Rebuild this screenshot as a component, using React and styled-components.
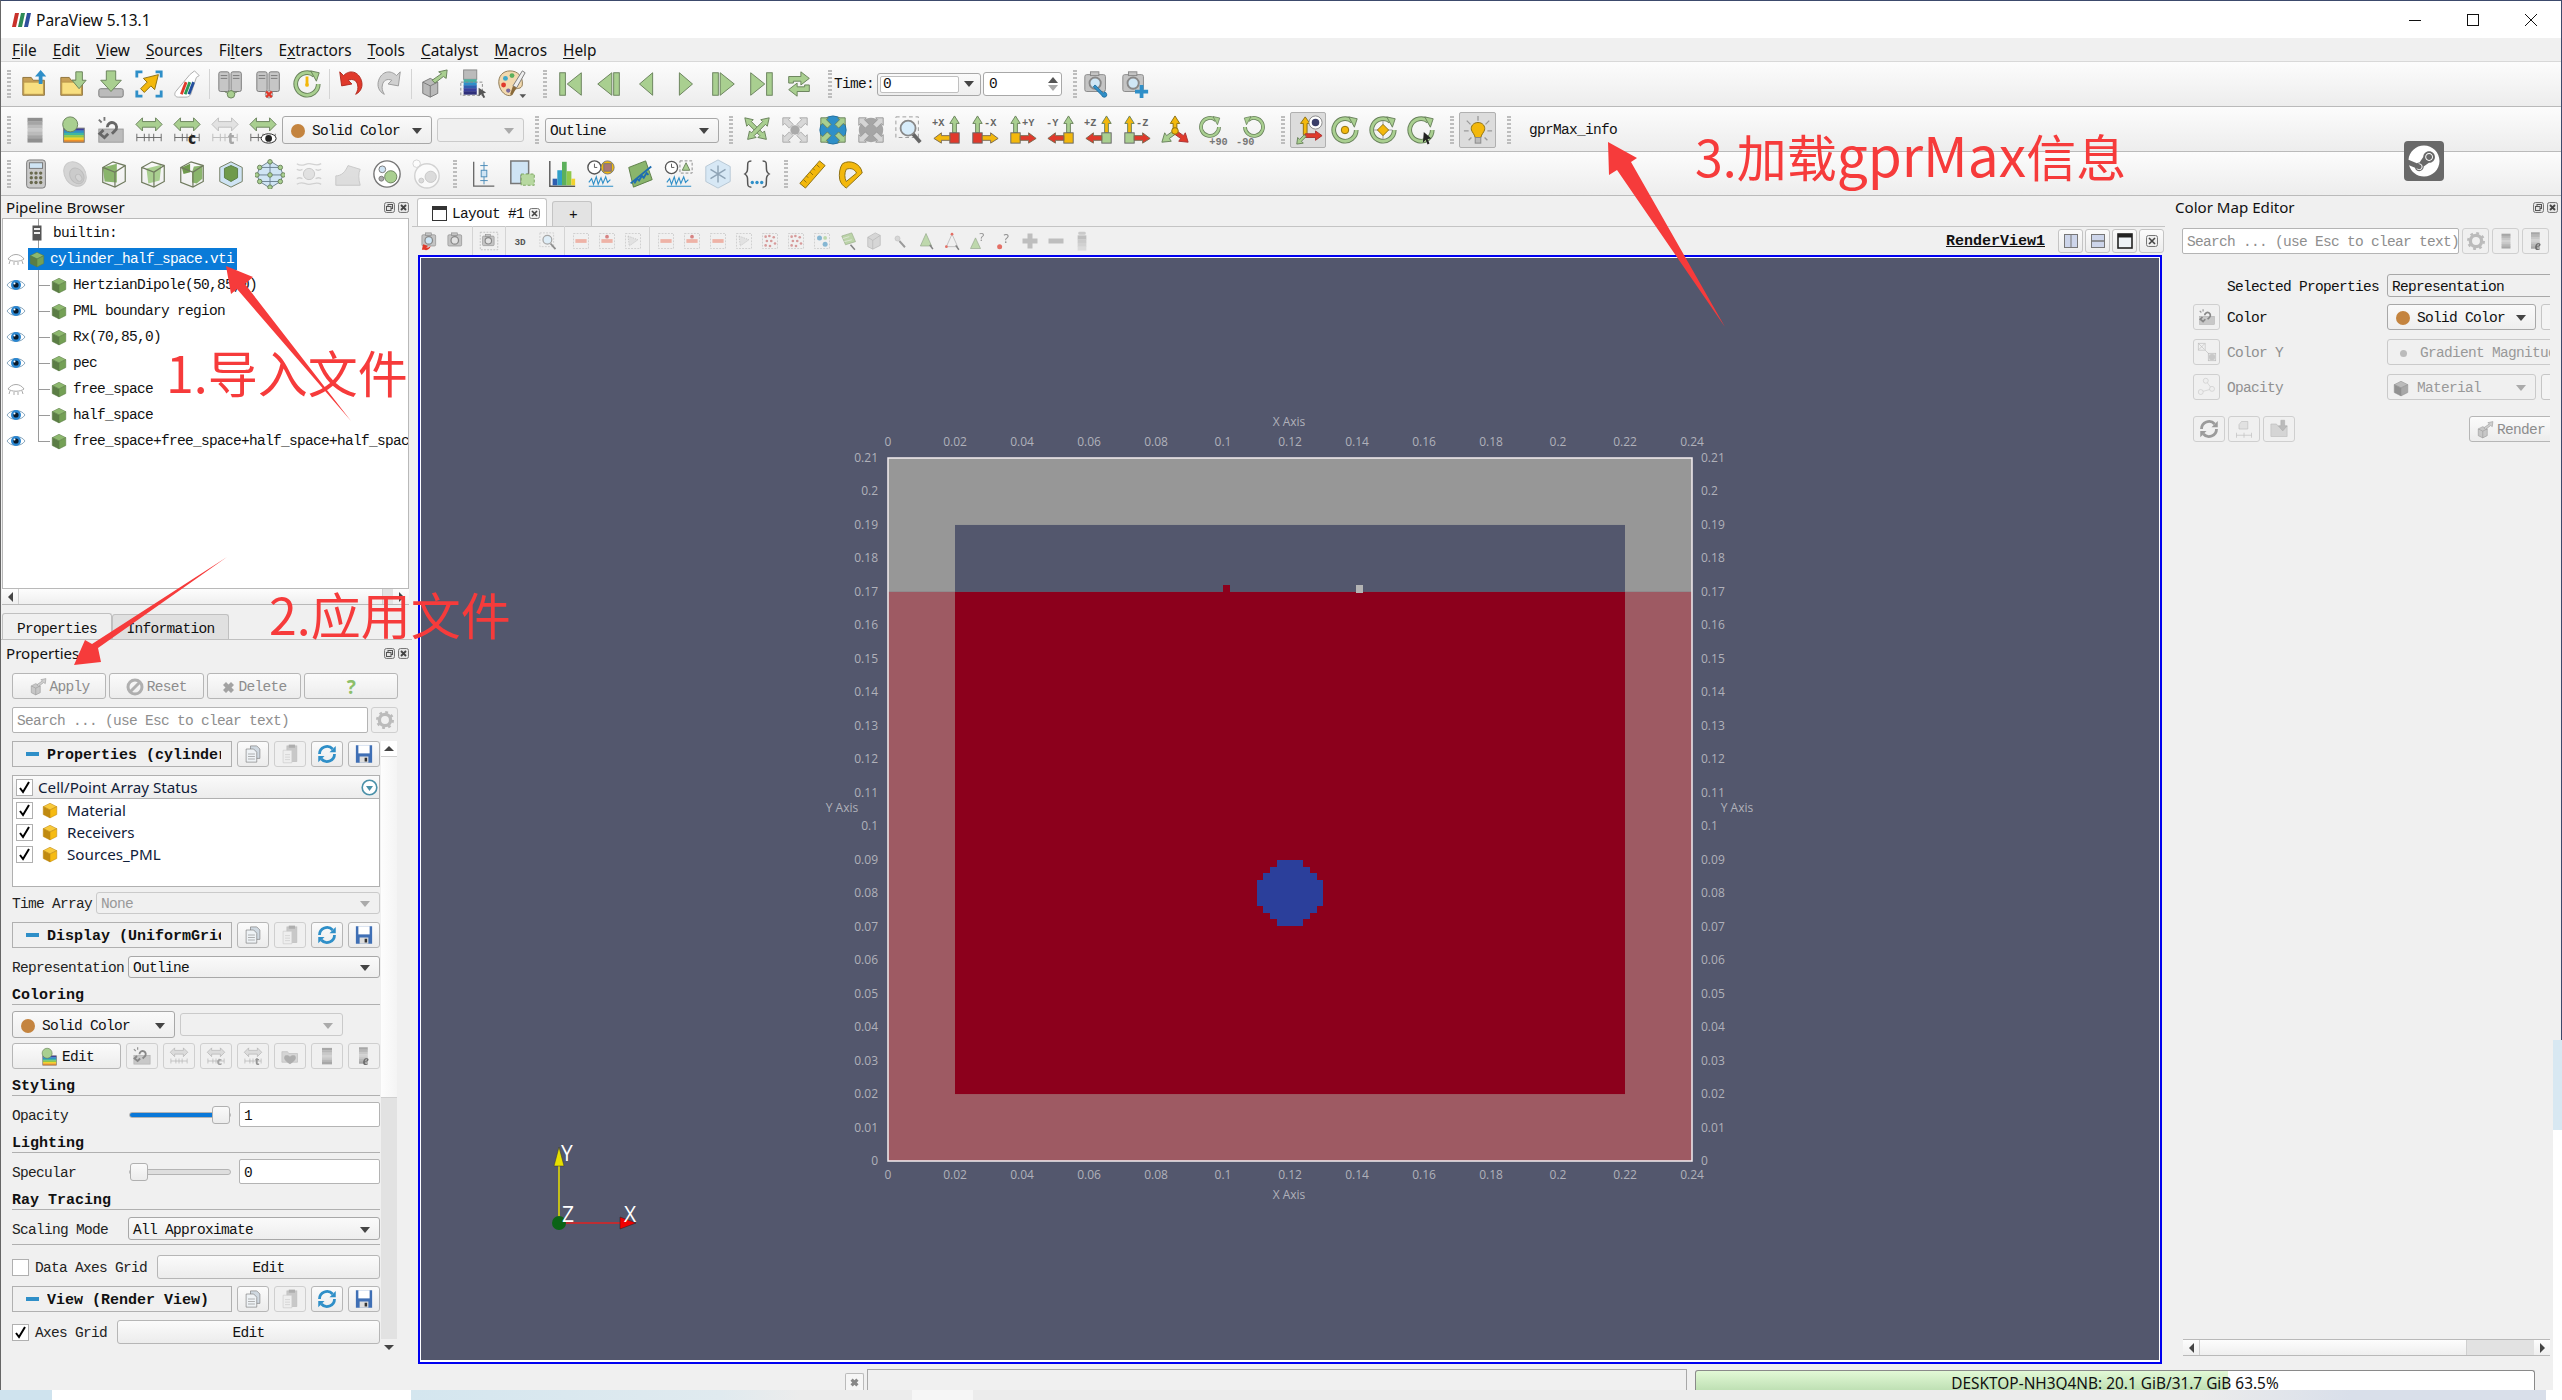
import React from 'react';
import styled, { createGlobalStyle } from 'styled-components';
import { FaSteam } from 'react-icons/fa';

const G = '#a9cf90';
const GD = '#67805a';
const Y = '#f3b80c';
const YD = '#8a6d10';
const B = '#2f8fc8';
const R = '#e0392b';

const GlobalStyle = createGlobalStyle`
  html, body { margin: 0; padding: 0; background: #f0f0f0; overflow: hidden; }
  * { box-sizing: border-box; }
`;

const MONO = `"Liberation Mono", "DejaVu Sans Mono", monospace`;
const SANS = `"Noto Sans", "Open Sans", sans-serif`;

const stripes = (x, y, w, h, colors) =>
  colors.map((c, i) => (
    <rect key={i} x={x} y={y + (i * h) / colors.length} width={w} height={h / colors.length + 0.4} fill={c} />
  ));

const GRAYS = ['#8f8f8f', '#a5a5a5', '#bbb', '#c9c9c9', '#bbb', '#a5a5a5', '#8f8f8f'];
const RAINBOW = ['#3a3fa0', '#2f8fc8', '#3fb7a0', '#8fc84a', '#f2d22e', '#ee8f2a'];

const cube = (f = '#74a055', d = '#5b7d45', t = '#8db86e') => (
  <>
    <path d="M4 10l12-6 12 6-12 6z" fill={t} stroke={d} />
    <path d="M4 10v14l12 6V16z" fill={d} stroke={d} />
    <path d="M28 10v14l-12 6V16z" fill={f} stroke={d} />
  </>
);

const folder = (arrow) => (
  <>
    <path d="M3 9h9l2 3h12v16H3z" fill="#c79f55" stroke="#8e723a" />
    <path d="M4 14h21v13H4z" fill="#f8df80" stroke="#b7964a" />
    {arrow}
  </>
);

const server = (x) => (
  <g>
    <rect x={x} y="3" width="11" height="21" rx="2" fill="#c6c6c6" stroke="#777" />
    <path d={`M${x + 2} 7h7M${x + 2} 10h7`} stroke="#777" />
  </g>
);

const ring = (inner) => (
  <>
    <path d="M24 7a12 12 0 1 0 4 9" fill="none" stroke={GD} strokeWidth="5" />
    <path d="M24 7a12 12 0 1 0 4 9" fill="none" stroke={G} strokeWidth="3" />
    <path d="M20 2l9 2-3 9z" fill={G} stroke={GD} />
    {inner}
  </>
);

const rescale = (extra, off) => (
  <>
    <path d="M2 10l7-7v4h14V3l7 7-7 7v-4H9v4z" fill={off ? '#d5d5d5' : G} stroke={off ? '#999' : GD} />
    <path d="M3 24h26M3 20v8M11 20v8M16 20v8M21 20v8M29 20v8" stroke={off ? '#999' : '#666'} fill="none" />
    {extra}
  </>
);

const arrows = (c, d) => (
  <>
    <path d="M3 3l9 2-2 2 12 12 2-2 2 9-9-2 2-2L7 10l-2 2z" fill={c} stroke={d} />
    <path d="M29 3l-9 2 2 2-12 12-2-2-2 9 9-2-2-2L25 10l2 2z" fill={c} stroke={d} />
  </>
);

const inArrows = (c, d) => (
  <path d="M3 3h8l-2 2 5 5-4 4-5-5-2 2zM29 3h-8l2 2-5 5 4 4 5-5 2 2zM3 29h8l-2-2 5-5-4-4-5 5-2-2zM29 29h-8l2-2-5-5 4-4 5 5 2-2z" fill={c} stroke={d} />
);

const axis = (label, v, h, s, left) =>
  left ? (
    <>
      <text x="0" y="12" fontFamily={MONO} fontWeight="700" fontSize="11" fill="#666">{label}</text>
      <path d="M24 1l5 8h-3v10h-4V9h-3z" fill={v} stroke={GD} />
      <rect x="19" y="19" width="10" height="11" fill={s} stroke="#666" />
      <path d="M19 22h-9v-3l-8 6 8 5v-3h9z" fill={h} stroke="#7a6a50" />
    </>
  ) : (
    <>
      <text x="15" y="12" fontFamily={MONO} fontWeight="700" fontSize="11" fill="#666">{label}</text>
      <path d="M8 1l5 8h-3v10H6V9H3z" fill={v} stroke={GD} />
      <rect x="3" y="19" width="10" height="11" fill={s} stroke="#666" />
      <path d="M13 22h9v-3l8 6-8 5v-3h-9z" fill={h} stroke="#7a6a50" />
    </>
  );

const box = (inner) => (
  <>
    {inner}
    <path d="M4 9l11-6 13 4v17l-11 6-13-5zM4 9l13 5v16M17 14l11-7" fill="none" stroke="#6f7a5e" strokeWidth="1.3" />
  </>
);

const selBox = (inner) => (
  <>
    <rect x="4" y="4" width="24" height="24" fill="none" stroke="#aaa" strokeDasharray="3 2" />
    {inner}
  </>
);

const camera = (extra) => (
  <>
    <rect x="3" y="6" width="22" height="18" rx="2" fill="#c4c4c4" stroke="#888" />
    <rect x="9" y="3" width="9" height="4" fill="#c4c4c4" stroke="#888" />
    <circle cx="14" cy="15" r="6" fill="#cfe6f5" stroke="#888" strokeWidth="2" />
    {extra}
  </>
);

const ICONS = {
  folderUp: folder(<path d="M22 1l6 7h-4v8h-4V8h-4z" fill={B} />),
  folderDown: folder(<path d="M19 3h7v9h4l-7.5 9-7.5-9h4z" fill={G} stroke={GD} />),
  saveData: (
    <>
      <rect x="3" y="21" width="26" height="9" rx="2" fill="#bbb" stroke="#777" />
      <path d="M11 2h10v10h6L16 24 5 12h6z" fill={G} stroke={GD} />
    </>
  ),
  connect: (
    <>
      <path d="M3 9V3h6M23 3h6v6M29 23v6h-6M9 29H3v-6" fill="none" stroke={B} strokeWidth="3" />
      <path d="M26 6L10 10l4 4-7 7 4 4 7-7 4 4z" fill={Y} stroke={YD} />
    </>
  ),
  macro: (
    <>
      <path d="M24 2l5 5-3 2-6 18c-1 2-3 3-5 3H7c-4 0-5-3-3-6L19 6z" fill="#fff" stroke="#aaa" />
      <path d="M10 27l5-13" stroke={R} strokeWidth="3" />
      <path d="M14 27l5-13" stroke="#2c9a55" strokeWidth="3" />
      <path d="M18 27l5-13" stroke="#234f9e" strokeWidth="3" />
    </>
  ),
  serverOn: (
    <>
      {server(3)}
      {server(16)}
      <path d="M9 24l7 4 7-4" fill="none" stroke={GD} />
      <circle cx="16" cy="27" r="4" fill={G} stroke={GD} />
    </>
  ),
  serverOff: (
    <>
      {server(3)}
      {server(16)}
      <circle cx="16" cy="27" r="4" fill="#ccc" stroke="#999" />
      <path d="M13 24l6 6M19 24l-6 6" stroke={R} strokeWidth="2.5" />
    </>
  ),
  recover: ring(
    <>
      <path d="M16 8v9" stroke={Y} strokeWidth="3" />
      <circle cx="16" cy="17" r="2" fill={Y} />
    </>
  ),
  undo: <path d="M4 3l2 15 11-2-4-4c5-2 9 0 10 5 1 3 0 7-2 10 6-3 8-9 6-15C24 3 15 0 8 7z" fill={R} stroke="#b02a1f" />,
  redo: <path d="M28 3l-2 15-11-2 4-4c-5-2-9 0-10 5-1 3 0 7 2 10-6-3-8-9-6-15C8 3 17 0 24 7z" fill="#d0d0d0" stroke="#999" />,
  cubeArrow: (
    <>
      <path d="M4 14l8-4 8 4v12l-8 4-8-4z" fill="#b9b9b9" stroke="#777" />
      <path d="M12 18l8-4M12 18v12M12 18l-8-4" stroke="#777" />
      <path d="M14 12L24 5l-3-2 9-2-1 9-3-2-9 7z" fill={G} stroke={GD} />
    </>
  ),
  colormap: (
    <>
      <rect x="6" y="1" width="14" height="10" fill="#bbb" stroke="#888" />
      {stripes(6, 11, 14, 16, ['#46b2a2', '#2f8fc8', '#2f5fb0', '#3a3f9a', '#2e2f7a'])}
      <rect x="3" y="14" width="23" height="14" fill="none" stroke="#888" strokeDasharray="3 2" />
      <path d="M22 20l8 5-3 1 2 4-2 1-2-4-3 2z" fill="#555" />
    </>
  ),
  palette: (
    <>
      <path d="M14 2C6 2 1 8 2 16c1 8 8 14 13 12 3-1 1-4 3-6 3-2 8 0 9-5C28 8 22 2 14 2z" fill="#f2d9ae" stroke="#8a7550" />
      <circle cx="9" cy="10" r="2.6" fill="#3fa7c9" />
      <circle cx="16" cy="7" r="2.6" fill="#5cb05c" />
      <circle cx="7" cy="17" r="2.6" fill={R} />
      <circle cx="12" cy="23" r="2.3" fill="#7b6a9c" />
      <path d="M27 2l3 2-9 16-4-2z" fill="#eee" stroke="#777" />
      <path d="M17 18l4 2-5 8-2-1z" fill="#8a6a3a" />
      <path d="M24 27h7l-3.5 4z" fill="#555" />
    </>
  ),
  first: (
    <>
      <rect x="4" y="4" width="6" height="24" fill={G} stroke={GD} />
      <path d="M27 4v24L12 16z" fill={G} stroke={GD} />
    </>
  ),
  prev: (
    <>
      <rect x="21" y="4" width="6" height="24" fill={G} stroke={GD} />
      <path d="M19 4v24L4 16z" fill={G} stroke={GD} />
    </>
  ),
  back: <path d="M22 4v24L8 16z" fill={G} stroke={GD} />,
  play: <path d="M10 4v24l14-12z" fill={G} stroke={GD} />,
  next: (
    <>
      <rect x="5" y="4" width="6" height="24" fill={G} stroke={GD} />
      <path d="M13 4v24l15-12z" fill={G} stroke={GD} />
    </>
  ),
  last: (
    <>
      <rect x="22" y="4" width="6" height="24" fill={G} stroke={GD} />
      <path d="M5 4v24l15-12z" fill={G} stroke={GD} />
    </>
  ),
  loop: (
    <>
      <path d="M5 15V8h13V3l9 7-9 7v-4h-8v2z" fill={G} stroke={GD} />
      <path d="M27 17v7H14v5l-9-7 9-7v4h8v-2z" fill={G} stroke={GD} />
    </>
  ),
  camWrench: camera(<path d="M14 17l9 9c0-2 2-2 3 0 1 2 0 4-2 4-2 0-3-1-3-2l-9-9z" fill={B} stroke="#1f6d9e" />),
  camPlus: camera(<path d="M21 17h4v5h5v4h-5v5h-4v-5h-5v-4h5z" fill={B} />),
  colorbar: stripes(8, 3, 16, 26, GRAYS),
  editColor: (
    <>
      {stripes(6, 14, 22, 15, RAINBOW)}
      <rect x="6" y="14" width="22" height="15" fill="none" stroke="#777" />
      <circle cx="13" cy="10" r="8" fill={G} stroke={GD} />
    </>
  ),
  linkColor: (
    <>
      <rect x="3" y="15" width="26" height="14" fill="#bbb" stroke="#999" />
      <path d="M12 13a5 5 0 1 1 8 4l-3 3" fill="none" stroke="#666" strokeWidth="3" />
      <path d="M8 16l-4 4 5 4 4-4" fill="none" stroke="#666" strokeWidth="3" />
      <path d="M3 5l3 3M9 2v4" stroke="#777" strokeWidth="2" />
    </>
  ),
  rescale: rescale(),
  rescaleOff: rescale(null, true),
  rescaleC: rescale(<text x="17" y="31" fontFamily={SANS} fontWeight="800" fontSize="16" fill="#222">c</text>),
  rescaleCOff: rescale(<text x="17" y="31" fontFamily={SANS} fontWeight="800" fontSize="16" fill="#888">c</text>, true),
  rescaleT: rescale(<text x="19" y="31" fontFamily={SANS} fontWeight="800" fontSize="16" fill="#777">t</text>, true),
  rescaleEye: rescale(
    <>
      <ellipse cx="22" cy="25" rx="8" ry="5" fill="#fff" stroke="#222" />
      <circle cx="22" cy="25" r="3.6" fill="#222" />
    </>
  ),
  fit: arrows(G, GD),
  fitClosest: (
    <>
      {inArrows('#d8d8d8', '#aaa')}
      <circle cx="16" cy="16" r="5" fill="#aaa" />
    </>
  ),
  fitData: (
    <>
      <ellipse cx="16" cy="16" rx="14" ry="15" fill={B} stroke="#1f6d9e" />
      {inArrows(G, GD)}
    </>
  ),
  fitGray: (
    <>
      <circle cx="16" cy="16" r="13" fill="#a5a5a5" />
      {inArrows('#d5d5d5', '#999')}
    </>
  ),
  zoomBox: (
    <>
      <rect x="2" y="2" width="24" height="22" fill="none" stroke="#999" strokeDasharray="4 3" />
      <path d="M20 20l8 9" stroke="#666" strokeWidth="4" />
      <circle cx="15" cy="14" r="8" fill="#d7ecfa" stroke="#888" strokeWidth="2" />
    </>
  ),
  px: axis('+X', G, Y, R, true),
  mx: axis('-X', G, Y, R, false),
  py: axis('+Y', G, R, Y, false),
  my: axis('-Y', G, R, Y, true),
  pz: axis('+Z', Y, R, G, true),
  mz: axis('-Z', Y, R, G, false),
  iso: (
    <>
      <path d="M16 1l5 8h-3v8h-4V9h-3z" fill={Y} stroke={YD} />
      <path d="M14 17l-7 5-2-3-3 10 10-1-2-3 7-5z" fill={G} stroke={GD} />
      <path d="M18 17l7 5 2-3 3 10-10-1 2-3-7-5z" fill={R} stroke="#a33" />
      <circle cx="16" cy="17" r="3.5" fill={Y} stroke={YD} />
    </>
  ),
  rotP: (
    <>
      <g transform="scale(.8)">{ring()}</g>
      <text x="12" y="32" fontFamily={MONO} fontWeight="700" fontSize="11" fill="#777">+90</text>
    </>
  ),
  rotM: (
    <>
      <g transform="translate(32 0) scale(-.8 .8)">{ring()}</g>
      <text x="0" y="32" fontFamily={MONO} fontWeight="700" fontSize="11" fill="#777">-90</text>
    </>
  ),
  orient: (
    <>
      <path d="M13 2l5 7h-3v12h-4V9H8z" fill={Y} stroke={YD} />
      <path d="M13 20h11v-3l7 5-7 5v-3H13z" fill={R} stroke="#a33" />
      <path d="M12 21l-5 5-2-2-1 7 7-1-2-2 5-5z" fill={G} stroke={GD} />
      <ellipse cx="24" cy="8" rx="7" ry="7" fill="#fff" stroke="#888" />
      <circle cx="24" cy="8" r="4" fill="#3a3f6a" />
    </>
  ),
  center: ring(<circle cx="16" cy="16" r="4" fill={Y} stroke={YD} />),
  centerFocal: ring(
    <>
      <path d="M16 6v20M6 16h20" stroke="#999" />
      <path d="M16 10l6 6-6 6-6-6z" fill={Y} stroke={YD} />
    </>
  ),
  centerPick: ring(<path d="M19 18l8 7-4 .5 2 5-2 1-2-5-3 3z" fill="#222" />),
  bulb: (
    <>
      <path d="M16 1v5M4 6l4 4M28 6l-4 4M1 17h5M26 17h5M6 27l3-3M26 27l-3-3" stroke="#999" strokeWidth="1.4" />
      <path d="M16 8c-5 0-8 4-7 8 1 3 3 4 4 8h6c1-4 3-5 4-8 1-4-2-8-7-8z" fill={Y} stroke={YD} />
      <rect x="13" y="24" width="6" height="6" fill="#bbb" stroke="#888" />
    </>
  ),
  calc: (
    <>
      <rect x="6" y="1" width="20" height="30" rx="3" fill="#c9c9c9" stroke="#777" />
      <rect x="9" y="4" width="14" height="6" fill="#cfe4f4" stroke="#777" />
      {[0, 1, 2].map((r) =>
        [0, 1, 2].map((c) => <circle key={`${r}${c}`} cx={11 + c * 5} cy={15 + r * 5} r="1.8" fill="#6a6a4f" />)
      )}
    </>
  ),
  contour: (
    <>
      <ellipse cx="16" cy="16" rx="11" ry="14" transform="rotate(-35 16 16)" fill="#c0c0c0" stroke="#aaa" />
      <ellipse cx="18" cy="18" rx="7" ry="9" transform="rotate(-35 18 18)" fill="#b0b0b0" stroke="#999" />
      <ellipse cx="20" cy="20" rx="3" ry="4" transform="rotate(-35 20 20)" fill="#c0c0c0" stroke="#999" />
    </>
  ),
  clip: box(<path d="M4 9l15-4v20L6 24z" fill="#8ab56c" />),
  slice: box(<path d="M9 10l16-4-2 17-12 3z" fill={G} />),
  threshold: box(
    <>
      <path d="M5 9l9-4v9l-7 2z" fill="#6f9a4c" />
      <path d="M18 8l9-1v14l-6 5-5-1V14z" fill="#8ab56c" />
    </>
  ),
  extract: (
    <>
      <path d="M4 9l12-6 12 6v15l-12 6-12-6z" fill="#cfe4f4" stroke="#6f7a5e" />
      <path d="M9 10l7-3 7 3v10l-7 4-7-4z" fill="#6f9a4c" stroke="#5b7d45" />
    </>
  ),
  glyph: (
    <>
      <path d="M16 2l11 7 3 8-3 7-11 7-11-7-3-7 3-8z" fill="#cfe4f4" stroke="#6a7f8f" />
      <path d="M16 2v29M2 17h28M5 9h22M5 24h22" stroke="#6a7f8f" />
      {[[16, 3], [27, 9], [30, 17], [27, 24], [16, 30], [5, 24], [2, 17], [5, 9], [16, 17]].map(([x, y]) => (
        <circle key={`${x}${y}`} cx={x} cy={y} r="2.4" fill={G} stroke={GD} />
      ))}
    </>
  ),
  stream: (
    <>
      <circle cx="16" cy="16" r="6" fill="#d5d5d5" stroke="#aaa" />
      <path d="M3 5c6 4 8 0 13 0s8 3 13 0M3 27c6-4 8 0 13 0s8-3 13 0M3 11c3 2 4 1 6 0M23 11c2 1 3 2 6 0M3 21c3-2 4-1 6 0M23 21c2-1 3-2 6 0" fill="none" stroke="#bbb" strokeWidth="1.4" />
    </>
  ),
  warp: <path d="M3 28V18c6 0 10-4 13-11l13 4c-2 4-2 10 0 17z" fill="#d0d0d0" stroke="#aaa" />,
  group: (
    <>
      <circle cx="16" cy="16" r="14" fill="#fff" stroke="#777" strokeWidth="1.5" />
      <circle cx="20" cy="19" r="6.5" fill={G} stroke={GD} />
      <circle cx="11" cy="11" r="3.6" fill="#cfe4f4" stroke="#777" />
      <circle cx="10" cy="21" r="2.6" fill="#aaa" stroke="#777" />
    </>
  ),
  groupOff: (
    <>
      <circle cx="6" cy="5" r="4" fill="#fff" stroke="#bbb" />
      <circle cx="17" cy="18" r="13" fill="#fff" stroke="#bbb" strokeWidth="1.5" />
      <circle cx="21" cy="19" r="6" fill="#ccc" stroke="#aaa" />
      <circle cx="11" cy="23" r="2.6" fill="#ccc" stroke="#aaa" />
    </>
  ),
  plotLine: (
    <>
      <path d="M5 3v26h22" fill="none" stroke="#666" strokeWidth="1.4" />
      <path d="M16 3v24M12 7h8M12 23h8" stroke="#4a8bb8" />
      <rect x="13" y="12" width="6" height="7" fill="#cfe4f4" stroke="#4a8bb8" />
    </>
  ),
  extractSel: (
    <>
      <path d="M3 2h19v14l-8 2v8H3z" fill="#cfe4f4" stroke="#777" strokeWidth="1.6" />
      <rect x="14" y="16" width="14" height="12" fill="#b7d8a0" stroke="#7aa35e" strokeDasharray="3 2" />
    </>
  ),
  histogram: (
    <>
      <path d="M3 2v27h27" fill="none" stroke="#555" strokeWidth="1.5" />
      <rect x="6" y="21" width="5" height="7" fill="#2f5fb0" />
      <rect x="11" y="12" width="5" height="16" fill="#2f9fc8" />
      <rect x="16" y="3" width="5" height="25" fill="#5cb05c" />
      <rect x="21" y="13" width="5" height="15" fill="#8fc84a" />
      <rect x="26" y="21" width="4" height="7" fill="#f2d22e" />
    </>
  ),
  plotTime: (
    <>
      <circle cx="9" cy="9" r="7" fill="#fff" stroke="#555" strokeWidth="1.5" />
      <path d="M9 5v4h3" fill="none" stroke="#555" />
      <circle cx="23" cy="9" r="7" fill={Y} stroke="#777" />
      <rect x="19" y="5" width="8" height="8" fill="#a77" stroke="#777" />
      <path d="M3 29h26M3 25l3-4 2 6 3-8 2 8 3-7 2 6 3-7 2 6 3-3" fill="none" stroke="#2f8fc8" strokeWidth="1.2" />
    </>
  ),
  linePlot: (
    <>
      <path d="M4 9l18-7 7 20-20 8z" fill="#8ab56c" stroke="#5b7d45" />
      <path d="M6 26L28 8M10 26l3-5 2 2 3-5 2 2 3-5 2 2" fill="none" stroke="#1f6db0" strokeWidth="2" />
    </>
  ),
  plotSel: (
    <>
      <circle cx="8" cy="9" r="6.5" fill="#fff" stroke="#555" strokeWidth="1.4" />
      <path d="M8 5v4h3" fill="none" stroke="#555" />
      <rect x="17" y="2" width="13" height="13" fill="none" stroke="#888" strokeDasharray="3 2" />
      <path d="M23.5 4l4 8h-8z" fill={G} stroke={GD} />
      <path d="M3 29h26M3 25l3-4 2 6 3-8 2 8 3-7 2 6 3-7 2 6 3-3" fill="none" stroke="#2f8fc8" strokeWidth="1.2" />
    </>
  ),
  snow: (
    <>
      <path d="M16 1l13 7v16l-13 7-13-7V8z" fill="#d7e8f5" stroke="#b5c6d4" />
      <path d="M16 7v18M8 11l16 10M24 11L8 21" stroke="#8ea3b5" strokeWidth="1.5" />
    </>
  ),
  braces: (
    <>
      <path d="M10 2c-4 0-4 2-4 6s0 6-3 8c3 2 3 4 3 8s0 6 4 6M22 2c4 0 4 2 4 6s0 6 3 8c-3 2-3 4-3 8s0 6-4 6" fill="none" stroke="#555" strokeWidth="1.6" />
      <circle cx="11" cy="25" r="1.8" fill={B} />
      <circle cx="16" cy="25" r="1.8" fill={B} />
      <circle cx="21" cy="25" r="1.8" fill={B} />
    </>
  ),
  ruler: (
    <>
      <path d="M24 2l6 5L9 31l-6-5z" fill={Y} stroke={YD} />
      <path d="M21 6l3 3M17 10l2 2M14 14l3 3M10 18l2 2M7 22l3 3" stroke={YD} />
    </>
  ),
  protractor: (
    <>
      <path d="M8 5c8-5 20 0 21 10L12 31c-3-2-6-5-7-9-1-6 0-13 3-17z" fill={Y} stroke={YD} />
      <path d="M12 11c5-2 9 0 11 4L12 24c-2-4-2-9 0-13z" fill="#f0f0f0" stroke={YD} />
    </>
  ),
  // view toolbar
  camUndo: camera(<path d="M3 30l2-9 8 3-3 2c3 1 5 0 7-2-1 5-6 8-10 6z" fill={R} />),
  camRedo: camera(),
  camShot: (
    <>
      <rect x="2" y="2" width="28" height="28" fill="none" stroke="#aaa" strokeDasharray="3 2" />
      <g transform="translate(3 3) scale(.85)">{camera()}</g>
    </>
  ),
  view3d: <text x="4" y="22" fontFamily={MONO} fontWeight="700" fontSize="15" fill="#555">3D</text>,
  zoomSel: (
    <>
      <rect x="3" y="3" width="22" height="22" fill="none" stroke="#aaa" strokeDasharray="3 2" />
      <path d="M20 20l8 9" stroke="#666" strokeWidth="3" />
      <circle cx="15" cy="14" r="7" fill="#d7ecfa" stroke="#888" strokeWidth="2" />
    </>
  ),
  selRed: selBox(<rect x="7" y="13" width="18" height="6" fill="#e98" />),
  selRedDot: selBox(
    <>
      <rect x="7" y="13" width="18" height="6" fill="#e98" />
      <circle cx="16" cy="9" r="3" fill="#c55" />
    </>
  ),
  selPoly: selBox(<path d="M8 8l16 6-14 10z" fill="#ddd" stroke="#999" strokeDasharray="2 2" />),
  selDots: selBox(
    <>
      {[[9, 9], [15, 8], [22, 10], [11, 16], [18, 16], [24, 20], [9, 23], [16, 24]].map(([x, y]) => (
        <circle key={`${x}${y}`} cx={x} cy={y} r="2.1" fill="#c77" />
      ))}
    </>
  ),
  selBlue: selBox(
    <>
      <circle cx="12" cy="11" r="4" fill="#5aa0c8" />
      <circle cx="21" cy="21" r="4" fill="#5aa0c8" />
      <circle cx="21" cy="11" r="3" fill={G} />
    </>
  ),
  selPlot: (
    <>
      <path d="M6 8l16-5 6 14-16 5z" fill="#a6c98a" stroke="#6f8a5a" />
      <path d="M8 12l10-3M10 17l12-3" stroke="#eee" />
      <path d="M20 22l7 8" stroke="#555" strokeWidth="2.5" />
    </>
  ),
  selCell: <path d="M6 10l12-7 8 4v16l-12 6-8-4zM6 10l8 5v14M14 15l12-8" fill="#ccc" stroke="#999" />,
  selDot: (
    <>
      <circle cx="12" cy="12" r="4" fill="#ccc" stroke="#aaa" />
      <path d="M15 16l9 10" stroke="#777" strokeWidth="3" />
    </>
  ),
  selTri: (
    <>
      <path d="M16 4l9 20H7z" fill={G} stroke={GD} />
      <path d="M22 22l5 7" stroke="#555" strokeWidth="2.5" />
    </>
  ),
  selTriRed: (
    <>
      <path d="M16 5l9 20H7z" fill="none" stroke="#888" />
      <circle cx="16" cy="5" r="2.2" fill={R} />
      <circle cx="7" cy="25" r="2.2" fill={R} />
      <path d="M22 23l5 7" stroke="#555" strokeWidth="2.5" />
    </>
  ),
  triQ: (
    <>
      <path d="M12 11l8 17H4z" fill={G} stroke={GD} />
      <text x="18" y="16" fontFamily={SANS} fontSize="18" fill="#666">?</text>
    </>
  ),
  dotQ: (
    <>
      <circle cx="9" cy="25" r="4" fill={R} />
      <text x="15" y="19" fontFamily={SANS} fontSize="20" fill="#666">?</text>
    </>
  ),
  plus: <path d="M12 4h8v8h8v8h-8v8h-8v-8H4v-8h8z" fill="#aaa" />,
  minus: <rect x="4" y="12" width="24" height="8" fill="#aaa" />,
  trash: (
    <>
      <rect x="10" y="1" width="12" height="5" rx="2" fill="#bbb" />
      {stripes(9, 7, 14, 24, ['#aaa', '#bbb', '#c4c4c4', '#d2d2d2'])}
    </>
  ),
  // property panel
  copy: (
    <>
      <path d="M12 3h10l5 5v15H12z" fill="#cfd8e0" stroke="#777" />
      <path d="M5 8h12l5 5v16H5z" fill="#eef2f5" stroke="#777" />
      <path d="M8 16h11M8 20h11M8 24h11" stroke="#888" />
    </>
  ),
  paste: (
    <>
      <rect x="11" y="3" width="16" height="25" fill="#bbb" stroke="#aaa" />
      <rect x="14" y="1" width="10" height="5" fill="#999" />
      <path d="M5 10h14v20H5z" fill="#eee" stroke="#bbb" />
      <path d="M8 17h8M8 21h8M8 25h8" stroke="#bbb" />
    </>
  ),
  refresh: (
    <>
      <path d="M4 16a12 12 0 0 1 21-8" fill="none" stroke={B} strokeWidth="4.5" />
      <path d="M28 16a12 12 0 0 1-21 8" fill="none" stroke={B} strokeWidth="4.5" />
      <path d="M30 3v10H20z" fill={B} />
      <path d="M2 29V19h10z" fill={B} />
    </>
  ),
  save: (
    <>
      <path d="M3 2h26v28H3z" fill="#3f6fb5" />
      <rect x="7" y="2" width="18" height="13" fill="#fff" />
      <rect x="9" y="20" width="14" height="10" fill="#ddd" />
      <rect x="17" y="22" width="4" height="6" fill="#333" />
    </>
  ),
  gear: (
    <>
      <circle cx="16" cy="16" r="10" fill="none" stroke="#aaa" strokeWidth="6" />
      <circle cx="16" cy="16" r="14" fill="none" stroke="#aaa" strokeWidth="4" strokeDasharray="5 6" />
    </>
  ),
  edits: (
    <>
      {stripes(8, 2, 14, 26, GRAYS)}
      <text x="14" y="30" fontFamily='"Liberation Serif", serif' fontStyle="italic" fontWeight="700" fontSize="22" fill="#444">e</text>
    </>
  ),
  heart: (
    <>
      <path d="M3 9h9l2 3h14v14H3z" fill="#ccc" stroke="#aaa" />
      <path d="M16 29c-9-6-10-9-9-12 1-3 6-3 9 0 3-3 8-3 9 0 1 3 0 6-9 12z" fill="#999" />
    </>
  ),
  colorXy: (
    <>
      <rect x="2" y="2" width="11" height="11" fill="none" stroke="#aaa" />
      <path d="M3 3l9 9M12 3l-9 9" stroke="#aaa" />
      <path d="M13 13l6 6" stroke="#aaa" />
      <rect x="18" y="18" width="12" height="12" fill="#ddd" stroke="#aaa" />
      <circle cx="24" cy="24" r="5" fill="#bbb" />
    </>
  ),
  opacity: (
    <>
      <path d="M6 24l18-5M14 6l10 13" stroke="#bbb" fill="none" />
      <circle cx="14" cy="6" r="4" fill="#eee" stroke="#bbb" />
      <circle cx="24" cy="19" r="4" fill="#eee" stroke="#bbb" />
      <circle cx="6" cy="24" r="4" fill="#eee" stroke="#bbb" />
    </>
  ),
  saveMap: (
    <>
      <path d="M12 4h10v12H8V9z" fill="#ddd" stroke="#aaa" />
      <path d="M4 26h24M4 22v8M16 22v8M28 22v8" stroke="#aaa" />
    </>
  ),
  loadMap: (
    <>
      <path d="M3 8h9l2 3h15v17H3z" fill="#ccc" stroke="#aaa" />
      <path d="M19 2h6v9h4l-7 8-7-8h4z" fill="#aaa" stroke="#999" />
    </>
  ),
};

const Glyph = styled.svg`
  display: block;
  flex: none;
  letter-spacing: 0;
`;

const Icon = ({ name, size = 30 }) => (
  <Glyph width={size} height={size} viewBox="0 0 32 32">
    {ICONS[name]}
  </Glyph>
);

const Cube = ({ color, size = 18 }) => (
  <Glyph width={size} height={size} viewBox="0 0 32 32">
    {color === 'yellow' ? cube('#f6bb12', '#c08a10', '#f8c93a') : cube()}
  </Glyph>
);

const Eye = ({ open }) =>
  open ? (
    <Glyph width="20" height="14" viewBox="0 0 20 14">
      <path d="M1 7c4-6 14-6 18 0-4 6-14 6-18 0z" fill="#fff" stroke="#8aa9c0" />
      <circle cx="10" cy="7" r="5" fill="#2a86d0" />
      <circle cx="10" cy="7" r="2.6" fill="#0a1a2a" />
      <circle cx="8.5" cy="5.5" r="1" fill="#fff" />
    </Glyph>
  ) : (
    <Glyph width="20" height="14" viewBox="0 0 20 14">
      <path d="M2 7c4-6 12-6 16 0-4 3-12 3-16 0zM4 9l-1 3M8 10v3M12 10v3M16 9l1 3" fill="#fff" stroke="#aaa" />
    </Glyph>
  );

const Shell = styled.div`
  width: 2562px;
  height: 1400px;
  overflow: hidden;
  position: relative;
  display: flex;
  flex-direction: column;
  background: #f0f0f0;
  font-family: ${MONO};
  font-size: 14.5px;
  letter-spacing: -0.7px;
  color: #111;
`;

const WindowFrame = styled.div`
  height: 1390px;
  display: flex;
  flex-direction: column;
  border-top: 1px solid #3c4a6c;
  border-left: 1px solid #666;
  border-right: 1px solid #3c4a6c;
`;

const TitleBar = styled.div`
  height: 37px;
  flex: none;
  background: #fff;
  display: flex;
  align-items: center;
  padding-left: 10px;
  font-family: ${SANS};
  font-size: 15.5px;
  letter-spacing: 0;
  color: #111;
`;

const AppLogo = styled.svg`
  width: 20px;
  height: 16px;
  margin-right: 5px;
`;

const WinButtons = styled.div`
  margin-left: auto;
  display: flex;
  margin-right: 1px;
`;

const WinButton = styled.div`
  width: 58px;
  height: 37px;
  display: flex;
  align-items: center;
  justify-content: center;
`;

const MenuBar = styled.div`
  height: 24px;
  flex: none;
  display: flex;
  gap: 16px;
  align-items: center;
  padding-left: 11px;
  padding-top: 1px;
  font-family: ${SANS};
  font-size: 15.4px;
  letter-spacing: 0;
  border-bottom: 1px solid #d8d8d8;
  u { text-underline-offset: 2px; }
`;

const ToolRow = styled.div`
  height: ${({ $h }) => $h || 45}px;
  flex: none;
  display: flex;
  align-items: center;
  padding-top: ${({ $pt }) => $pt || 0}px;
  background: linear-gradient(#fcfcfc, #ededed);
  border-bottom: 1px solid #bababa;
`;

const Grip = styled.div`
  flex: none;
  width: 4px;
  height: 28px;
  margin-left: ${({ $l }) => $l ?? 6}px;
  margin-right: ${({ $r }) => $r ?? 5}px;
  border-left: 2px dotted #bdbdbd;
  border-right: 2px dotted #bdbdbd;
`;

const Sep = styled.div`
  flex: none;
  width: 1px;
  height: 30px;
  margin: 0 ${({ $m }) => $m ?? 2.5}px;
  background: #d4d4d4;
`;

const ToolBtn = styled.div`
  flex: none;
  width: ${({ $w }) => $w || 38}px;
  height: 36px;
  display: flex;
  align-items: center;
  justify-content: center;
  border-radius: 2px;
  ${({ $on }) => $on && 'background: #dcdcdc; border: 1px solid #b0b0b0;'}
  ${({ $off }) => $off && 'filter: grayscale(1); opacity: .6;'}
`;

const ViewTool = styled(ToolBtn)`
  height: 24px;
  width: 26px;
  opacity: ${({ $fade }) => ($fade ? 0.7 : 1)};
`;

const Tools = ({ names, w, size }) =>
  names.map((n, i) => {
    const off = n[0] === '-';
    return (
      <ToolBtn key={i} $w={w} $off={off}>
        <Icon name={off ? n.slice(1) : n} size={size} />
      </ToolBtn>
    );
  });

const Button = styled.div`
  flex: ${({ $w }) => ($w ? 'none' : '1')};
  width: ${({ $w }) => ($w ? `${$w}px` : 'auto')};
  height: ${({ $h }) => $h || 26}px;
  display: flex;
  align-items: center;
  justify-content: center;
  gap: 3px;
  padding-top: 2px;
  background: linear-gradient(#fbfbfb, #ececec);
  border: 1px solid #b6b6b6;
  border-radius: 3px;
  white-space: nowrap;
  overflow: hidden;
  color: ${({ $off }) => ($off ? '#8d8d8d' : '#111')};
  ${({ $off }) => $off && 'svg { filter: grayscale(1); opacity: .75; }'}
`;

const HelpButton = styled(Button)`
  color: #8cbf6a;
  font-family: ${SANS};
  font-weight: 700;
  font-size: 19px;
`;

const SmallBtn = styled(Button)`
  padding-top: 0;
  background: ${({ $off }) => ($off ? '#f0f0f0' : 'linear-gradient(#fbfbfb, #ececec)')};
  ${({ $off }) => $off && 'border-color: #cfcfcf;'}
`;

const Combo = styled.div`
  flex: ${({ $w }) => ($w ? 'none' : '1')};
  width: ${({ $w }) => ($w ? `${$w}px` : 'auto')};
  margin-left: ${({ $ml }) => $ml || 0}px;
  height: ${({ $h }) => $h || 23}px;
  display: flex;
  align-items: center;
  gap: 7px;
  padding: 2px 9px 0 4px;
  background: ${({ $flat }) => ($flat ? '#f0f0f0' : 'linear-gradient(#fafafa, #eeeeee)')};
  border: 1px solid ${({ $off }) => ($off ? '#cacaca' : '#a8a8a8')};
  border-radius: 3px;
  white-space: nowrap;
  overflow: hidden;
  color: ${({ $off }) => ($off ? '#999' : '#111')};
  ${({ $off }) => $off && 'svg { filter: grayscale(1); opacity: .75; }'}
  &::after {
    content: '';
    margin-left: auto;
    flex: none;
    border-left: 5px solid transparent;
    border-right: 5px solid transparent;
    border-top: 6px solid ${({ $off }) => ($off ? '#aaa' : '#444')};
  }
`;

const Swatch = styled.span`
  flex: none;
  width: ${({ $dot }) => ($dot ? 7 : 14)}px;
  height: ${({ $dot }) => ($dot ? 7 : 14)}px;
  margin: 0 ${({ $dot }) => ($dot ? 6 : 0)}px 0 ${({ $dot }) => ($dot ? 8 : 4)}px;
  border-radius: 50%;
  background: ${({ $dot }) => ($dot ? '#bbb' : '#c4843f')};
`;

const Input = styled.div`
  flex: ${({ $w }) => ($w ? 'none' : '1')};
  width: ${({ $w }) => ($w ? `${$w}px` : 'auto')};
  height: ${({ $h }) => $h || 26}px;
  display: flex;
  align-items: center;
  padding: 2px 0 0 4px;
  background: #fff;
  border: 1px solid #b4b4b4;
  border-radius: 2px;
  white-space: nowrap;
  overflow: hidden;
  color: ${({ $hint }) => ($hint ? '#8e8e8e' : '#111')};
`;

const TimeLabel = styled.span`
  flex: none;
  width: 43px;
`;

const TimeCombo = styled.div`
  flex: none;
  width: 104px;
  height: 23px;
  padding: 2px 21px 2px 2px;
  margin-right: 2px;
  background: linear-gradient(#fafafa, #eeeeee);
  border: 1px solid #a8a8a8;
  border-radius: 3px;
  position: relative;
  &::after {
    content: '';
    position: absolute;
    right: 6px;
    top: 7px;
    border-left: 5px solid transparent;
    border-right: 5px solid transparent;
    border-top: 6px solid #444;
  }
`;

const TimeValue = styled.div`
  height: 100%;
  background: #fff;
  border: 1px solid #c0c0c0;
  border-radius: 2px;
  padding-left: 2px;
  line-height: 15px;
`;

const Spin = styled.div`
  flex: none;
  width: 79px;
  height: 24px;
  background: #fff;
  border: 1px solid #a8a8a8;
  border-radius: 3px;
  display: flex;
  align-items: center;
  padding-left: 5px;
  position: relative;
  &::before {
    content: '';
    position: absolute;
    right: 3px;
    top: 4px;
    border-left: 5px solid transparent;
    border-right: 5px solid transparent;
    border-bottom: 6px solid #555;
  }
  &::after {
    content: '';
    position: absolute;
    right: 3px;
    bottom: 4px;
    border-left: 5px solid transparent;
    border-right: 5px solid transparent;
    border-top: 6px solid #aaa;
  }
`;

const InfoLabel = styled.span`
  white-space: nowrap;
`;

const Docks = styled.div`
  flex: 1;
  min-height: 0;
  display: flex;
`;

const LeftDock = styled.div`
  flex: none;
  width: 411px;
  display: flex;
  flex-direction: column;
`;

const DockTitle = styled.div`
  flex: none;
  height: ${({ $h }) => $h || 22}px;
  display: flex;
  align-items: center;
  padding: 0 3px 0 ${({ $pl }) => $pl ?? 5}px;
  font-family: ${SANS};
  font-size: 15.1px;
  letter-spacing: 0;
`;

const DockBtns = styled.div`
  margin-left: auto;
  display: flex;
  gap: 3px;
`;

const DockBtn = styled.svg`
  width: 11px;
  height: 11px;
  display: block;
`;

const DockButtons = () => (
  <DockBtns>
    <DockBtn viewBox="0 0 11 11">
      <rect x=".5" y=".5" width="10" height="10" rx="2" fill="#e4e4e4" stroke="#777" />
      <rect x="4" y="2.5" width="4.5" height="4" fill="none" stroke="#555" />
      <rect x="2.5" y="4.5" width="4.5" height="4" fill="#e4e4e4" stroke="#555" />
    </DockBtn>
    <DockBtn viewBox="0 0 11 11">
      <rect x=".5" y=".5" width="10" height="10" rx="2" fill="#e4e4e4" stroke="#777" />
      <path d="M3 3l5 5M8 3l-5 5" stroke="#444" strokeWidth="1.8" />
    </DockBtn>
  </DockBtns>
);

const Tree = styled.div`
  flex: none;
  width: 407px;
  margin-left: 1px;
  height: 370px;
  padding-top: 1px;
  background: #fff;
  border: 1px solid #b9b9b9;
  border-bottom: 0;
  overflow: hidden;
  position: relative;
  &::before {
    content: '';
    position: absolute;
    left: 35px;
    top: 0;
    height: 223px;
    width: 1px;
    background: #9a9a9a;
  }
`;

const TreeRow = styled.div`
  height: 26px;
  display: flex;
  align-items: center;
  position: relative;
  white-space: nowrap;
`;

const EyeCell = styled.div`
  flex: none;
  width: 25px;
  padding-left: 3px;
`;

const RootLabel = styled.div`
  display: flex;
  align-items: center;
  gap: 4px;
  height: 22px;
  padding-right: 3px;
  background: ${({ $sel }) => ($sel ? '#0a7bd8' : 'transparent')};
  color: ${({ $sel }) => ($sel ? '#fff' : '#111')};
`;

const BuiltinLabel = styled(RootLabel)`
  padding-left: 4px;
  gap: 11px;
`;

const ChildLabel = styled.div`
  display: flex;
  align-items: center;
  gap: 5px;
  margin-left: 22px;
  position: relative;
  &::before {
    content: '';
    position: absolute;
    left: -12px;
    top: 50%;
    width: 12px;
    height: 1px;
    background: #9a9a9a;
  }
`;

const HScroll = styled.div`
  flex: none;
  height: 17px;
  margin-left: ${({ $ml }) => $ml ?? 1}px;
  width: ${({ $w }) => $w}px;
  display: flex;
  background: linear-gradient(#fdfdfd, #efefef);
  border-top: 1px solid #b9b9b9;
  border-bottom: 1px solid #b9b9b9;
`;

const ScrollEnd = styled.div`
  flex: none;
  width: 16px;
  display: flex;
  align-items: center;
  justify-content: center;
  &::after {
    content: '';
    border-top: 5px solid transparent;
    border-bottom: 5px solid transparent;
    ${({ $dir }) => ($dir === 'left' ? 'border-right: 5px solid #444;' : 'border-left: 5px solid #444;')}
  }
`;

const ScrollHandle = styled.div`
  flex: 1;
  border-left: 1px solid #d0d0d0;
  border-right: 1px solid #d0d0d0;
`;

const ScrollTrack = styled.div`
  flex: none;
  width: ${({ $w }) => $w}px;
  background: #e2e2e2;
`;

const Splitter = styled.div`
  flex: none;
  height: 9px;
`;

const Tabs = styled.div`
  flex: none;
  height: 26px;
  display: flex;
  align-items: flex-end;
  padding-left: 1px;
  border-bottom: 1px solid #c0c0c0;
`;

const Tab = styled.div`
  flex: none;
  width: ${({ $w }) => $w}px;
  height: ${({ $active }) => ($active ? 26 : 25)}px;
  display: flex;
  align-items: center;
  justify-content: center;
  padding-top: 4px;
  background: ${({ $active }) => ($active ? '#f0f0f0' : '#e0e0e0')};
  border: 1px solid #c0c0c0;
  border-bottom: 0;
  border-radius: 3px 3px 0 0;
`;

const PropsPane = styled.div`
  flex: none;
  width: 386px;
  margin-left: 11px;
  margin-top: 7px;
  display: flex;
  flex-direction: column;
`;

const ActionRow = styled.div`
  display: flex;
  gap: 3px;
  height: 26px;
`;

const SearchRow = styled.div`
  display: flex;
  gap: 3px;
  margin-top: ${({ $mt }) => $mt ?? 8}px;
  height: 26px;
`;

const ScrollArea = styled.div`
  margin-top: 8px;
  height: 614px;
  display: flex;
`;

const ScrollContent = styled.div`
  flex: none;
  width: 368px;
  overflow: hidden;
  display: flex;
  flex-direction: column;
`;

const VScroll = styled.div`
  flex: none;
  width: 16px;
  margin-left: 1px;
  display: flex;
  flex-direction: column;
  background: #e2e2e2;
`;

const VEnd = styled.div`
  flex: none;
  height: 16px;
  display: flex;
  align-items: center;
  justify-content: center;
  background: #f0f0f0;
  ${({ $top }) => $top && 'background: #fff; border-bottom: 1px solid #d0d0d0;'}
  &::after {
    content: '';
    border-left: 5px solid transparent;
    border-right: 5px solid transparent;
    ${({ $top }) => ($top ? 'border-bottom: 5px solid #444;' : 'border-top: 5px solid #444;')}
  }
`;

const VHandle = styled.div`
  flex: none;
  height: 341px;
  background: linear-gradient(90deg, #fdfdfd, #f4f4f4);
  border-bottom: 1px solid #cfcfcf;
`;

const VFill = styled.div`
  flex: 1;
`;

const Section = styled.div`
  flex: none;
  display: flex;
  gap: 5px;
  height: 26px;
  margin-top: ${({ $mt }) => $mt ?? 0}px;
`;

const SectionTitle = styled.div`
  flex: none;
  width: 220px;
  height: 26px;
  display: flex;
  align-items: center;
  padding-left: 13px;
  gap: 8px;
  background: #f0f0f0;
  border: 1px solid #b0b0b0;
  font-weight: 700;
  font-size: 15px;
  letter-spacing: 0;
  white-space: nowrap;
  overflow: hidden;
  &::before {
    content: '';
    flex: none;
    width: 13px;
    height: 4px;
    background: #2f8fc8;
  }
`;

const SectionSpan = styled.span`
  display: block;
  overflow: hidden;
  width: 174px;
  padding-top: 2px;
`;

const ArrayBox = styled.div`
  flex: none;
  margin-top: 8px;
  height: 112px;
  background: #fff;
  border: 1px solid #b0b0b0;
  font-family: ${SANS};
  font-size: 15.2px;
  letter-spacing: 0;
  color: #10203a;
`;

const ArrayHead = styled.div`
  height: 23px;
  display: flex;
  align-items: center;
  padding-left: 3px;
  gap: 5px;
  background: linear-gradient(#fafafa, #ececec);
  border-bottom: 1px solid #b0b0b0;
`;

const ArrayRow = styled.div`
  height: 22px;
  display: flex;
  align-items: center;
  padding-left: 3px;
  gap: 8px;
`;

const Check = styled.span`
  flex: none;
  width: 17px;
  height: 17px;
  display: flex;
  align-items: center;
  justify-content: center;
  background: #fff;
  border: 1px solid #b0b0b0;
`;

const CheckMark = () => (
  <Glyph width="13" height="13" viewBox="0 0 13 13">
    <path d="M2 7l3 4 6-10" fill="none" stroke="#000" strokeWidth="2" />
  </Glyph>
);

const ExpandBtn = styled.svg`
  width: 17px;
  height: 17px;
  margin-left: auto;
  margin-right: 1px;
`;

const Field = styled.div`
  flex: none;
  display: flex;
  align-items: center;
  height: ${({ $h }) => $h || 23}px;
  margin-top: ${({ $mt }) => $mt ?? 6}px;
`;

const FieldLabel = styled.span`
  flex: none;
  width: ${({ $w }) => $w}px;
  padding-top: 2px;
  white-space: nowrap;
  color: #222;
`;

const GroupLabel = styled.div`
  flex: none;
  height: 19px;
  margin-top: ${({ $mt }) => $mt ?? 7}px;
  font-weight: 700;
  font-size: 15px;
  letter-spacing: 0;
  line-height: 19px;
  border-bottom: 1px solid #b0b0b0;
`;

const ColorRow = styled.div`
  flex: none;
  display: flex;
  align-items: center;
  gap: 5px;
  margin-top: ${({ $mt }) => $mt ?? 6}px;
  height: ${({ $h }) => $h || 27}px;
`;

const Slider = styled.div`
  flex: none;
  width: 102px;
  height: 6px;
  margin-right: 8px;
  border-radius: 3px;
  border: 1px solid #b4b4b4;
  background: ${({ $pct }) => `linear-gradient(90deg, #0a78d8 ${$pct}%, #dedede ${$pct}%)`};
  position: relative;
  &::after {
    content: '';
    position: absolute;
    top: -7px;
    left: ${({ $pct }) => ($pct ? 'auto' : '0')};
    right: ${({ $pct }) => ($pct ? '0' : 'auto')};
    width: 16px;
    height: 16px;
    background: linear-gradient(#fafafa, #ececec);
    border: 1px solid #b0b0b0;
    border-radius: 3px;
  }
`;

const Divider = styled.div`
  flex: none;
  height: 1px;
  margin-top: 4px;
  background: #b0b0b0;
`;

const GrayCheck = styled(Check)`
  margin-right: 6px;
`;

const Center = styled.div`
  flex: 1;
  min-width: 0;
  display: flex;
  flex-direction: column;
`;

const ViewTabs = styled.div`
  flex: none;
  height: 30px;
  display: flex;
  align-items: flex-end;
  gap: 5px;
  padding-left: 5px;
`;

const ViewTab = styled.div`
  flex: none;
  width: ${({ $w }) => $w}px;
  height: ${({ $h }) => $h}px;
  display: flex;
  align-items: center;
  gap: 5px;
  padding-left: ${({ $pl }) => $pl}px;
  padding-top: 2px;
  background: ${({ $active }) => ($active ? '#fff' : '#e3e3e3')};
  border: 1px solid #c4c4c4;
  border-bottom: 0;
  border-radius: 3px 3px 0 0;
`;

const LayoutGlyph = styled.span`
  flex: none;
  width: 15px;
  height: 15px;
  border: 1px solid #333;
  border-top-width: 4px;
  background: #fff;
`;

const ViewBar = styled.div`
  flex: none;
  height: 29px;
  display: flex;
  align-items: center;
  padding-left: 5px;
  padding-right: 1px;
  border-top: 1px solid #c4c4c4;
`;

const ViewName = styled.span`
  margin-left: auto;
  font-weight: 700;
  font-size: 15px;
  letter-spacing: 0;
  text-decoration: underline;
  margin-right: 11px;
`;

const PaneBtn = styled.div`
  flex: none;
  width: 25px;
  height: 24px;
  margin-left: 2px;
  display: flex;
  align-items: center;
  justify-content: center;
  background: linear-gradient(#fbfbfb, #ececec);
  border: 1px solid #c4c4c4;
  border-radius: 3px;
`;

const Viewport = styled.div`
  flex: 1;
  min-height: 0;
  width: 1744px;
  margin-left: 6px;
  padding: 1px;
  border: 2px solid #0000f0;
  background: #fff;
  overflow: hidden;
`;

const PlotCanvas = styled.svg`
  display: block;
  background: #53576d;
  letter-spacing: 0;
`;

const RightDock = styled.div`
  flex: none;
  width: 396px;
  display: flex;
  flex-direction: column;
`;

const RightPane = styled.div`
  flex: none;
  width: 368px;
  margin-left: 17px;
  margin-top: 10px;
  overflow: hidden;
`;

const MapRow = styled.div`
  display: grid;
  grid-template-columns: 27px 167px 149px 20px;
  align-items: center;
  height: ${({ $h }) => $h || 26}px;
  margin-top: ${({ $mt }) => $mt ?? 9}px;
  padding-left: 11px;
  width: 500px;
  color: ${({ $off }) => ($off ? '#909090' : '#111')};
`;

const MapLabel = styled.span`
  padding: 2px 0 0 7px;
  white-space: nowrap;
`;

const MapStub = styled.div`
  height: 26px;
  margin-left: 5px;
  width: 30px;
  background: #f4f4f4;
  border: 1px solid #c6c6c6;
  border-radius: 3px;
`;

const MapWideCombo = styled(Combo)`
  width: 200px;
`;

const MapActions = styled.div`
  display: flex;
  gap: 3px;
  margin-top: 16px;
  padding-left: 11px;
  height: 26px;
  width: 600px;
`;

const RenderBtn = styled(Button)`
  margin-left: 171px;
  justify-content: flex-start;
  padding-left: 6px;
`;

const BottomScroll = styled.div`
  margin-top: auto;
  margin-bottom: 8px;
`;

const StatusBar = styled.div`
  flex: none;
  height: 26px;
  display: flex;
  align-items: flex-end;
  padding-left: 844px;
`;

const StatusClose = styled.div`
  flex: none;
  width: 19px;
  height: 17px;
  margin-right: 3px;
  border: 1px solid #bbb;
  border-bottom: 0;
  border-radius: 2px 2px 0 0;
  background: #f6f6f6;
  display: flex;
  align-items: center;
  justify-content: center;
`;

const StatusMsg = styled.div`
  flex: none;
  width: 820px;
  height: 21px;
  margin-right: 8px;
  border: 1px solid #a8a8a8;
  border-bottom: 0;
`;

const MemBar = styled.div`
  flex: none;
  width: 840px;
  height: 20px;
  display: flex;
  align-items: center;
  justify-content: center;
  background: linear-gradient(90deg, #0000 63.5%, #fff 63.5%), linear-gradient(#e2f9d6, #bfe0b4);
  border: 1px solid #8a8a8a;
  border-bottom: 0;
  border-radius: 3px 3px 0 0;
  font-family: ${SANS};
  font-size: 15.4px;
  letter-spacing: 0;
  color: #111;
  white-space: nowrap;
  overflow: hidden;
  padding-top: 5px;
`;

const Taskbar = styled.div`
  flex: none;
  height: 10px;
  overflow: hidden;
  position: relative;
  background: linear-gradient(
    90deg,
    #cfe3ee 0,
    #cfe3ee 52px,
    #fff 52px,
    #fff 411px,
    #d4e6ef 411px,
    #e0eaef 720px,
    #ececec 800px,
    #ececec 912px,
    #f6f6f6 912px,
    #f6f6f6 973px,
    #ececec 973px,
    #ececec 2200px,
    #d9dfea 2350px,
    #d9dfea 2546px,
    #fff 2546px
  );
  font-family: ${SANS};
  font-size: 15px;
  letter-spacing: 0;
  line-height: 20px;
`;

const Clock = styled.span`
  position: absolute;
  left: 2419px;
  top: 6px;
`;

const EdgeStrip = styled.div`
  position: absolute;
  left: 2553px;
  top: 1040px;
  bottom: 0;
  width: 9px;
  background: linear-gradient(#d8e8f2 0, #d8e8f2 90px, #fff 90px);
`;

const Note = styled.div`
  position: absolute;
  left: ${({ $x }) => $x}px;
  top: ${({ $y }) => $y}px;
  font-family: "Noto Sans CJK SC", "Noto Sans", sans-serif;
  font-weight: 400;
  font-size: ${({ $size }) => $size}px;
  letter-spacing: 0;
  line-height: 1;
  color: #f63b3b;
  white-space: nowrap;
`;

const NoteLatin = styled.span`
  font-size: 55px;
`;

const ArrowLayer = styled.svg`
  position: absolute;
  inset: 0;
  width: 2562px;
  height: 1400px;
  pointer-events: none;
`;

const SteamBadge = styled.div`
  position: absolute;
  left: 2404px;
  top: 141px;
  width: 40px;
  height: 40px;
  border-radius: 4px;
  background: #696969;
  display: flex;
  align-items: center;
  justify-content: center;
  color: #fff;
`;

const XTICKS = [0, 0.02, 0.04, 0.06, 0.08, 0.1, 0.12, 0.14, 0.16, 0.18, 0.2, 0.22, 0.24];
const YTICKS = Array.from({ length: 22 }, (_, i) => i / 100);
const px = (v) => 888 + v * 3350;
const py = (v) => 1161 - v * 3347.6;
const fmt = (v) => String(Math.round(v * 100) / 100);

const AXIS = '#b0b1ba';

const Plot = () => (
  <PlotCanvas width="1738" height="1102" viewBox="421 258 1738 1102">
    <rect x={px(0)} y={py(0.21)} width="804" height={py(0.17) - py(0.21)} fill="#979797" />
    <rect x={px(0)} y={py(0.17)} width="804" height={py(0) - py(0.17)} fill="#9e5a63" />
    <rect x={px(0.02)} y={py(0.19)} width={px(0.22) - px(0.02)} height={py(0.17) - py(0.19)} fill="#53576d" />
    <rect x={px(0.02)} y={py(0.17)} width={px(0.22) - px(0.02)} height={py(0.02) - py(0.17)} fill="#8c001c" />
    <rect x="1223" y="585" width="7" height="8" fill="#8c001c" />
    <rect x="1356" y="585" width="7" height="8" fill="#b4b4b4" />
    <path
      d="M1277 860h26v7h7v6h7v7h6v26h-6v7h-7v6h-7v7h-26v-7h-7v-6h-7v-7h-6v-26h6v-7h7v-6h7z"
      fill="#2b3f9b"
    />
    <rect x={px(0)} y={py(0.21)} width="804" height={py(0) - py(0.21)} fill="none" stroke="#f4eef0" strokeWidth="1.5" />
    <g fill={AXIS} fontFamily='"Open Sans", "Liberation Sans", sans-serif' fontSize="12">
      {XTICKS.map((v) => (
        <g key={v} textAnchor="middle">
          <text x={px(v)} y="446">{fmt(v)}</text>
          <text x={px(v)} y="1179">{fmt(v)}</text>
        </g>
      ))}
      {YTICKS.map((v) => (
        <g key={v}>
          <text x="878" y={py(v) + 4} textAnchor="end">{fmt(v)}</text>
          <text x="1701" y={py(v) + 4}>{fmt(v)}</text>
        </g>
      ))}
      <text x="1289" y="426" textAnchor="middle">X Axis</text>
      <text x="1289" y="1199" textAnchor="middle">X Axis</text>
      <text x="842" y="812" textAnchor="middle">Y Axis</text>
      <text x="1737" y="812" textAnchor="middle">Y Axis</text>
    </g>
    <path d="M559 1223V1165" stroke="#e8e000" strokeWidth="1.5" />
    <path d="M559 1147l5 19h-10z" fill="#e8e000" stroke="#333" strokeWidth=".5" />
    <path d="M565 1223h56" stroke="#e02020" strokeWidth="1.5" />
    <path d="M636 1223l-16 6v-12z" fill="#f00000" stroke="#222" strokeWidth=".5" />
    <ellipse cx="559" cy="1223" rx="7" ry="7" fill="#0b6316" />
    <g fill="#fff" fontFamily='"Open Sans", "Liberation Sans", sans-serif' fontSize="21">
      <text x="561" y="1161">Y</text>
      <text x="562" y="1222">Z</text>
      <text x="624" y="1222">X</text>
    </g>
  </PlotCanvas>
);

const SectionButtons = () => (
  <>
    <SmallBtn $w={32}><Icon name="copy" size={20} /></SmallBtn>
    <SmallBtn $w={32} $off><Icon name="paste" size={20} /></SmallBtn>
    <SmallBtn $w={32}><Icon name="refresh" size={20} /></SmallBtn>
    <SmallBtn $w={32}><Icon name="save" size={20} /></SmallBtn>
  </>
);

const VIEW_GROUP_A = ['selRed', 'selRedDot', 'selPoly'];
const VIEW_GROUP_B = [
  'selRed', 'selRedDot', 'selRed', 'selPoly', 'selDots', 'selDots', 'selBlue', 'selPlot',
  'selCell', 'selDot', 'selTri', 'selTriRed', 'triQ', 'dotQ', 'plus', 'minus', 'trash',
];

const TREE_CHILDREN = [
  ['HertzianDipole(50,85,0)', true],
  ['PML boundary region', true],
  ['Rx(70,85,0)', true],
  ['pec', true],
  ['free_space', false],
  ['half_space', true],
  ['free_space+free_space+half_space+half_space+pec', true],
];

const App = () => (
  <Shell>
    <GlobalStyle />
    <WindowFrame>
      <TitleBar>
        <AppLogo viewBox="0 0 20 16">
          <path d="M4 1h4L5 15H1z" fill="#c8322b" />
          <path d="M10 1h4l-3 14H7z" fill="#2e8b57" />
          <path d="M16 1h4l-3 14h-4z" fill="#2f4f9e" />
        </AppLogo>
        ParaView 5.13.1
        <WinButtons>
          <WinButton>
            <svg width="14" height="14" viewBox="0 0 14 14"><path d="M1 7.5h12" stroke="#111" /></svg>
          </WinButton>
          <WinButton>
            <svg width="14" height="14" viewBox="0 0 14 14"><rect x="1.5" y="1.5" width="11" height="11" fill="none" stroke="#111" /></svg>
          </WinButton>
          <WinButton>
            <svg width="14" height="14" viewBox="0 0 14 14"><path d="M1 1l12 12M13 1L1 13" stroke="#111" /></svg>
          </WinButton>
        </WinButtons>
      </TitleBar>
      <MenuBar>
        <span><u>F</u>ile</span>
        <span><u>E</u>dit</span>
        <span><u>V</u>iew</span>
        <span><u>S</u>ources</span>
        <span>Fi<u>l</u>ters</span>
        <span>E<u>x</u>tractors</span>
        <span><u>T</u>ools</span>
        <span><u>C</u>atalyst</span>
        <span><u>M</u>acros</span>
        <span><u>H</u>elp</span>
      </MenuBar>

      <ToolRow>
        <Grip />
        <Tools names={['folderUp', 'folderDown', 'saveData', 'connect', 'macro']} />
        <Sep />
        <Tools names={['serverOn', 'serverOff', 'recover']} />
        <Sep />
        <Tools names={['undo', 'redo']} />
        <Sep />
        <Tools w={39} names={['cubeArrow', 'colormap', 'palette']} />
        <Grip $l={12} $r={5} />
        <Tools names={['first', 'prev', 'back', 'play', 'next', 'last', 'loop']} />
        <Grip $l={10} $r={2} />
        <TimeLabel>Time:</TimeLabel>
        <TimeCombo><TimeValue>0</TimeValue></TimeCombo>
        <Spin>0</Spin>
        <Grip $l={11} $r={1} />
        <Tools names={['camWrench', 'camPlus']} />
      </ToolRow>

      <ToolRow $pt={2}>
        <Grip />
        <Tools names={['colorbar', 'editColor', 'linkColor', 'rescale', 'rescaleC', '-rescaleT', 'rescaleEye']} />
        <Combo $w={150} $h={28}><Swatch />Solid Color</Combo>
        <Combo $w={87} $h={24} $off $flat $ml={5} />
        <Grip $l={11} $r={6} />
        <Combo $w={174} $h={25}>Outline</Combo>
        <Grip $l={10} $r={5} />
        <Tools names={['fit', 'fitClosest', 'fitData', 'fitGray', 'zoomBox', 'px', 'mx', 'py', 'my', 'pz', 'mz', 'iso', 'rotP', 'rotM']} />
        <Grip $l={11} $r={5} />
        <ToolBtn $w={36} $on><Icon name="orient" /></ToolBtn>
        <Tools names={['center', 'centerFocal', 'centerPick']} />
        <Grip $l={10} $r={5} />
        <ToolBtn $w={37} $on><Icon name="bulb" /></ToolBtn>
        <Grip $l={11} $r={18} />
        <InfoLabel>gprMax_info</InfoLabel>
      </ToolRow>

      <ToolRow $h={44}>
        <Grip />
        <Tools w={39} names={['calc', '-contour', 'clip', 'slice', 'threshold', 'extract', 'glyph', '-stream', '-warp', 'group', '-groupOff']} />
        <Grip $l={8} $r={7} />
        <Tools w={39} names={['plotLine', 'extractSel', 'histogram', 'plotTime', 'linePlot', 'plotSel', 'snow', 'braces']} />
        <Grip $l={8} $r={5} />
        <Tools names={['ruler', 'protractor']} />
      </ToolRow>

      <Docks>
        <LeftDock>
          <DockTitle>Pipeline Browser<DockButtons /></DockTitle>
          <Tree>
            <TreeRow>
              <EyeCell />
              <BuiltinLabel>
                <Glyph width="10" height="16" viewBox="0 0 10 16">
                  <rect x=".5" y=".5" width="9" height="15" fill="#555" />
                  <rect x="2" y="3" width="6" height="2" fill="#eee" />
                  <rect x="2" y="7" width="6" height="2" fill="#eee" />
                </Glyph>
                builtin:
              </BuiltinLabel>
            </TreeRow>
            <TreeRow>
              <EyeCell><Eye /></EyeCell>
              <RootLabel $sel><Cube />cylinder_half_space.vti</RootLabel>
            </TreeRow>
            {TREE_CHILDREN.map(([label, open]) => (
              <TreeRow key={label}>
                <EyeCell><Eye open={open} /></EyeCell>
                <ChildLabel><Cube />{label}</ChildLabel>
              </TreeRow>
            ))}
          </Tree>
          <HScroll $w={407}>
            <ScrollEnd $dir="left" />
            <ScrollHandle />
            <ScrollTrack $w={10} />
            <ScrollEnd $dir="right" />
          </HScroll>
          <Splitter />
          <Tabs>
            <Tab $active $w={110}>Properties</Tab>
            <Tab $w={117}>Information</Tab>
          </Tabs>
          <DockTitle $h={26}>Properties<DockButtons /></DockTitle>
          <PropsPane>
            <ActionRow>
              <Button $off><Icon name="cubeArrow" size={18} />Apply</Button>
              <Button $off>
                <Glyph width="18" height="18" viewBox="0 0 18 18">
                  <circle cx="9" cy="9" r="7" fill="none" stroke="#999" strokeWidth="3" />
                  <path d="M4 14L14 4" stroke="#999" strokeWidth="3" />
                </Glyph>
                Reset
              </Button>
              <Button $off>
                <Glyph width="15" height="15" viewBox="0 0 15 15">
                  <path d="M2 5l3-3 2.5 2.5L10 2l3 3-2.5 2.5L13 10l-3 3-2.5-2.5L5 13l-3-3 2.5-2.5z" fill="#888" />
                </Glyph>
                Delete
              </Button>
              <HelpButton>?</HelpButton>
            </ActionRow>
            <SearchRow>
              <Input $hint>Search ... (use Esc to clear text)</Input>
              <SmallBtn $w={27} $off><Icon name="gear" size={18} /></SmallBtn>
            </SearchRow>
            <ScrollArea>
              <ScrollContent>
                <Section>
                  <SectionTitle><SectionSpan>Properties (cylinder_half_space.vti)</SectionSpan></SectionTitle>
                  <SectionButtons />
                </Section>
                <ArrayBox>
                  <ArrayHead>
                    <Check><CheckMark /></Check>
                    Cell/Point Array Status
                    <ExpandBtn viewBox="0 0 17 17">
                      <circle cx="8.5" cy="8.5" r="7.3" fill="#fff" stroke="#4a90a8" strokeWidth="1.6" />
                      <path d="M5 7h7l-3.5 5z" fill="#4a90a8" />
                    </ExpandBtn>
                  </ArrayHead>
                  {['Material', 'Receivers', 'Sources_PML'].map((name) => (
                    <ArrayRow key={name}>
                      <Check><CheckMark /></Check>
                      <Cube color="yellow" />
                      {name}
                    </ArrayRow>
                  ))}
                </ArrayBox>
                <Field $mt={5} $h={22}>
                  <FieldLabel $w={84}>Time Array</FieldLabel>
                  <Combo $off $flat $h={22}>None</Combo>
                </Field>
                <Section $mt={8}>
                  <SectionTitle><SectionSpan>Display (UniformGridRepresentation)</SectionSpan></SectionTitle>
                  <SectionButtons />
                </Section>
                <Field $mt={8} $h={22}>
                  <FieldLabel $w={116}>Representation</FieldLabel>
                  <Combo $h={22}>Outline</Combo>
                </Field>
                <GroupLabel $mt={8}>Coloring</GroupLabel>
                <ColorRow>
                  <Combo $w={163} $h={27}><Swatch />Solid Color</Combo>
                  <Combo $w={163} $off $flat />
                </ColorRow>
                <ColorRow $mt={5} $h={26}>
                  <Button $w={109}><Icon name="editColor" size={20} />Edit</Button>
                  <SmallBtn $w={32} $off><Icon name="linkColor" size={20} /></SmallBtn>
                  <SmallBtn $w={32} $off><Icon name="rescaleOff" size={20} /></SmallBtn>
                  <SmallBtn $w={32} $off><Icon name="rescaleCOff" size={20} /></SmallBtn>
                  <SmallBtn $w={32} $off><Icon name="rescaleT" size={20} /></SmallBtn>
                  <SmallBtn $w={32} $off><Icon name="heart" size={20} /></SmallBtn>
                  <SmallBtn $w={32} $off><Icon name="colorbar" size={20} /></SmallBtn>
                  <SmallBtn $w={32} $off><Icon name="edits" size={20} /></SmallBtn>
                </ColorRow>
                <GroupLabel $mt={8}>Styling</GroupLabel>
                <Field $mt={6} $h={25}>
                  <FieldLabel $w={117}>Opacity</FieldLabel>
                  <Slider $pct={100} />
                  <Input $w={141} $h={25}>1</Input>
                </Field>
                <GroupLabel>Lighting</GroupLabel>
                <Field $mt={6} $h={25}>
                  <FieldLabel $w={117}>Specular</FieldLabel>
                  <Slider $pct={0} />
                  <Input $w={141} $h={25}>0</Input>
                </Field>
                <GroupLabel>Ray Tracing</GroupLabel>
                <Field $mt={7}>
                  <FieldLabel $w={116}>Scaling Mode</FieldLabel>
                  <Combo>All Approximate</Combo>
                </Field>
                <Divider />
                <Field $mt={10} $h={24}>
                  <GrayCheck />
                  <FieldLabel $w={122}>Data Axes Grid</FieldLabel>
                  <Button $w={223} $h={24}>Edit</Button>
                </Field>
                <Section $mt={7}>
                  <SectionTitle><SectionSpan>View (Render View)</SectionSpan></SectionTitle>
                  <SectionButtons />
                </Section>
                <Field $mt={8} $h={24}>
                  <GrayCheck><CheckMark /></GrayCheck>
                  <FieldLabel $w={82}>Axes Grid</FieldLabel>
                  <Button $w={263} $h={24}>Edit</Button>
                </Field>
              </ScrollContent>
              <VScroll>
                <VEnd $top />
                <VHandle />
                <VFill />
                <VEnd />
              </VScroll>
            </ScrollArea>
          </PropsPane>
        </LeftDock>

        <Center>
          <ViewTabs>
            <ViewTab $active $w={130} $h={28} $pl={14}>
              <LayoutGlyph />
              Layout #1
              <Glyph width="11" height="11" viewBox="0 0 11 11">
                <rect x=".5" y=".5" width="10" height="10" rx="2" fill="#eee" stroke="#777" />
                <path d="M3 3l5 5M8 3l-5 5" stroke="#444" strokeWidth="1.6" />
              </Glyph>
            </ViewTab>
            <ViewTab $w={40} $h={25} $pl={16}>+</ViewTab>
          </ViewTabs>
          <ViewBar>
            <ViewTool><Icon name="camUndo" size={20} /></ViewTool>
            <ViewTool $off><Icon name="camRedo" size={20} /></ViewTool>
            <Sep $m={3} />
            <ViewTool $off><Icon name="camShot" size={20} /></ViewTool>
            <Sep $m={3} />
            <ViewTool><Icon name="view3d" size={20} /></ViewTool>
            <ViewTool $fade><Icon name="zoomSel" size={20} /></ViewTool>
            <Sep $m={3} />
            {VIEW_GROUP_A.map((name, i) => (
              <ViewTool key={i} $fade><Icon name={name} size={20} /></ViewTool>
            ))}
            <Sep $m={3} />
            {VIEW_GROUP_B.map((name, i) => (
              <ViewTool key={i} $fade><Icon name={name} size={20} /></ViewTool>
            ))}
            <ViewName>RenderView1</ViewName>
            <PaneBtn>
              <Glyph width="18" height="18" viewBox="0 0 18 18">
                <rect x="2.5" y="2.5" width="13" height="13" fill="#cdd5ea" stroke="#777" />
                <path d="M9 3v12" stroke="#777" />
              </Glyph>
            </PaneBtn>
            <PaneBtn>
              <Glyph width="18" height="18" viewBox="0 0 18 18">
                <rect x="2.5" y="2.5" width="13" height="13" fill="#cdd5ea" stroke="#777" />
                <path d="M3 9h12" stroke="#777" strokeWidth="1.5" />
              </Glyph>
            </PaneBtn>
            <PaneBtn>
              <Glyph width="18" height="18" viewBox="0 0 18 18">
                <rect x="2" y="2" width="14" height="14" fill="#eef2f6" stroke="#222" strokeWidth="1.6" />
                <rect x="2" y="2" width="14" height="3.5" fill="#222" />
              </Glyph>
            </PaneBtn>
            <PaneBtn>
              <Glyph width="16" height="16" viewBox="0 0 16 16">
                <rect x="2.5" y="2.5" width="11" height="11" rx="2" fill="#eee" stroke="#777" />
                <path d="M5 5l6 6M11 5l-6 6" stroke="#444" strokeWidth="1.6" />
              </Glyph>
            </PaneBtn>
          </ViewBar>
          <Viewport>
            <Plot />
          </Viewport>
        </Center>

        <RightDock>
          <DockTitle $pl={10}>Color Map Editor<DockButtons /></DockTitle>
          <RightPane>
            <SearchRow $mt={0}>
              <Input $w={277} $hint>Search ... (use Esc to clear text)</Input>
              <SmallBtn $w={27} $off><Icon name="gear" size={18} /></SmallBtn>
              <SmallBtn $w={27} $off><Icon name="colorbar" size={18} /></SmallBtn>
              <SmallBtn $w={27} $off><Icon name="edits" size={20} /></SmallBtn>
            </SearchRow>
            <MapRow $mt={20} $h={22}>
              <span />
              <MapLabel>Selected Properties</MapLabel>
              <MapWideCombo $h={23} $flat>Representation</MapWideCombo>
            </MapRow>
            <MapRow $mt={8}>
              <SmallBtn $w={27} $off><Icon name="linkColor" size={18} /></SmallBtn>
              <MapLabel>Color</MapLabel>
              <Combo $h={26}><Swatch />Solid Color</Combo>
              <MapStub />
            </MapRow>
            <MapRow $off>
              <SmallBtn $w={27} $off><Icon name="colorXy" size={20} /></SmallBtn>
              <MapLabel>Color Y</MapLabel>
              <MapWideCombo $h={26} $off $flat>
                <Swatch $dot />
                Gradient Magnitude
              </MapWideCombo>
            </MapRow>
            <MapRow $off>
              <SmallBtn $w={27} $off><Icon name="opacity" size={20} /></SmallBtn>
              <MapLabel>Opacity</MapLabel>
              <Combo $h={26} $off $flat><Cube />Material</Combo>
              <MapStub />
            </MapRow>
            <MapActions>
              <SmallBtn $w={32} $off><Icon name="refresh" size={20} /></SmallBtn>
              <SmallBtn $w={32} $off><Icon name="saveMap" size={20} /></SmallBtn>
              <SmallBtn $w={32} $off><Icon name="loadMap" size={20} /></SmallBtn>
              <RenderBtn $w={120} $off><Icon name="cubeArrow" size={18} />Render View</RenderBtn>
            </MapActions>
          </RightPane>
          <BottomScroll>
            <HScroll $ml={18} $w={367}>
              <ScrollEnd $dir="left" />
              <ScrollHandle />
              <ScrollTrack $w={67} />
              <ScrollEnd $dir="right" />
            </HScroll>
          </BottomScroll>
        </RightDock>
      </Docks>

      <StatusBar>
        <StatusClose>
          <Glyph width="11" height="11" viewBox="0 0 15 15">
            <path d="M2 5l3-3 2.5 2.5L10 2l3 3-2.5 2.5L13 10l-3 3-2.5-2.5L5 13l-3-3 2.5-2.5z" fill="#888" />
          </Glyph>
        </StatusClose>
        <StatusMsg />
        <MemBar>DESKTOP-NH3Q4NB: 20.1 GiB/31.7 GiB 63.5%</MemBar>
      </StatusBar>
    </WindowFrame>
    <Taskbar>
      <Clock>18:55</Clock>
    </Taskbar>

    <EdgeStrip />
    <ArrowLayer viewBox="0 0 2562 1400">
      <polygon points="226,266 253,277 245,284 351,421 237,289 231,294" fill="#f63b3b" />
      <polygon points="227,557 98,648 101,662 74,665 85,640 92,644" fill="#f63b3b" />
      <polygon points="1608,142 1637,158 1631,162 1725,327 1617,170 1609,175" fill="#f63b3b" />
    </ArrowLayer>
    <Note $x={166} $y={346} $size={50}>1.导入文件</Note>
    <Note $x={269} $y={588} $size={50}>2.应用文件</Note>
    <Note $x={1695} $y={126} $size={50}>3.加载<NoteLatin>gprMax</NoteLatin>信息</Note>
    <SteamBadge><FaSteam size={32} /></SteamBadge>
  </Shell>
);

export default App;
